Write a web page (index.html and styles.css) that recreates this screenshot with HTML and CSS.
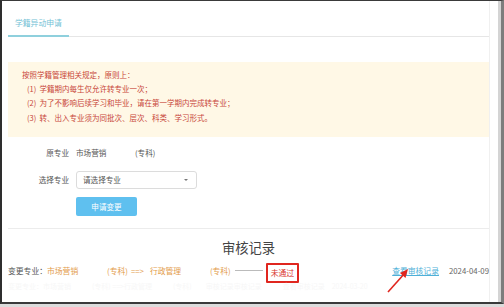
FILE: index.html
```html
<!DOCTYPE html>
<html lang="zh-CN">
<head>
<meta charset="utf-8">
<title>学籍异动申请</title>
<link rel="stylesheet" href="styles.css">
</head>
<body>
<div class="frame">
  <div class="panel">
    <div class="tabs">
      <div class="tab">学籍异动申请</div>
    </div>

    <div class="notice">
      <p>按照学籍管理相关规定，原则上：</p>
      <p class="item">(1)&nbsp;&nbsp;学籍期内每生仅允许转专业一次；</p>
      <p class="item">(2)&nbsp;&nbsp;为了不影响后续学习和毕业，请在第一学期内完成转专业；</p>
      <p class="item">(3)&nbsp;&nbsp;转、出入专业须为同批次、层次、科类、学习形式。</p>
    </div>

    <div class="form">
      <div class="label row1">原专业</div>
      <div class="value row1"><span class="major">市场营销</span><span>(专科)</span></div>
      <div class="label row2">选择专业</div>
      <div class="value row2">
        <div class="select"><span>请选择专业</span><i class="caret"></i></div>
      </div>
      <div class="value row3"><button class="btn">申请变更</button></div>
    </div>

    <div class="records">
      <h2 class="title">审核记录</h2>
      <div class="record">
        <span class="key">变更专业：</span>
        <span class="org name">市场营销</span>
        <span class="org">(专科)</span>
        <span class="org arrow">==&gt;</span>
        <span class="org name">行政管理</span>
        <span class="org">(专科)</span>
        <span class="line"></span>
        <span class="status">未通过</span>
        <a class="link" href="#">查看审核记录</a>
        <span class="date">2024-04-09</span>
      </div>
      <div class="ghost">变更专业：市场营销　　　(专科) ==&gt;行政管理　　　(专科)　　审核记录审核记录　　　查看审核记录　2024-03-20</div>
    </div>

    <svg class="pointer" width="30" height="30" viewBox="0 0 30 30">
      <line x1="3" y1="26" x2="20" y2="7" stroke="#e0261f" stroke-width="1.6"/>
      <polygon points="23,3 20.5,12 15,7" fill="#e0261f"/>
    </svg>
  </div>
</div>
</body>
</html>
```

FILE: styles.css
```css
* { box-sizing: border-box; }
html, body { margin: 0; padding: 0; }
body {
  width: 504px;
  height: 307px;
  background: #dcdcdc;
  font-family: "Noto Sans CJK SC", "Noto Sans", sans-serif;
  overflow: hidden;
}
.frame {
  width: 504px;
  height: 304px;
  border-top: 1px solid #3a3a3a;
  border-left: 2px solid #2e2e2e;
  border-bottom: 2px solid #3a3a3a;
  border-right: 3px solid #7d7d7d;
  background: #ffffff;
  box-shadow: inset -3px 0 0 #d4d4d4;
}
.panel {
  position: relative;
  height: 100%;
  margin-right: 11px;
  padding-left: 6px;
  border-right: 1px solid #f0f0f0;
}
.tabs {
  display: flex;
  border-bottom: 1px solid #e6e6e6;
}
.tab {
  padding: 16px 6px 6px 7px;
  width: 61px;
  font-size: 7.8px;
  line-height: 12px;
  color: #74c2d6;
  border-bottom: 2px solid #8fd0dd;
  margin-bottom: -1px;
  white-space: nowrap;
}
.notice {
  margin-top: 25px;
  background: #fff8e6;
  padding: 6px 14px 12px;
  color: #c8463a;
  font-size: 7.5px;
  line-height: 14.2px;
}
.notice p { margin: 0; white-space: nowrap; }
.notice .item { padding-left: 5px; }

.form {
  display: grid;
  grid-template-columns: 61px auto;
  column-gap: 7px;
  font-size: 7.6px;
  color: #555;
  margin-top: 8px;
}
.label { text-align: right; }
.row1 { line-height: 16px; }
.row2 { margin-top: 10px; display: flex; align-items: center; }
.label.row2 { justify-content: flex-end; }
.row3 { grid-column: 2; margin-top: 8px; }
.major { display: inline-block; width: 59px; }
.select {
  width: 121px;
  height: 18px;
  border: 1px solid #dcdcdc;
  border-radius: 3px;
  display: flex;
  align-items: center;
  justify-content: space-between;
  padding: 0 8px 0 6px;
  color: #555;
}
.caret {
  width: 0; height: 0;
  border-left: 2px solid transparent;
  border-right: 2px solid transparent;
  border-top: 2px solid #777;
}
.btn {
  width: 61px;
  height: 19px;
  border: none;
  border-radius: 2px;
  background: #5fc0ef;
  color: #fff;
  font-family: inherit;
  font-size: 7.6px;
  padding: 0;
}
.records {
  margin-top: 12px;
  border-top: 1px solid #ececec;
}
.title {
  margin: 10px 0 0;
  text-align: center;
  font-size: 13.3px;
  line-height: 18px;
  font-weight: normal;
  color: #444;
}
.record {
  display: flex;
  align-items: center;
  font-size: 7.8px;
  margin-top: 4px;
  height: 20px;
  white-space: nowrap;
}
.key { width: 39px; color: #555; }
.org { color: #e39c4b; }
.name { width: 60px; }
.arrow { width: 22px; padding-left: 3px; }
.line {
  width: 28px;
  height: 1px;
  background: #bbb;
  margin: 0 3px 0 4px;
}
.status {
  border: 2px solid #e0261f;
  border-radius: 1px;
  color: #d8332b;
  height: 20px;
  line-height: 16px;
  padding: 0 3px 0 3px;
  margin-top: 5px;
}
.link {
  margin-left: auto;
  color: #4eb0d8;
  text-decoration: underline;
}
.date {
  margin-left: 10px;
  color: #666;
}
.ghost {
  margin-top: 0;
  font-size: 7px;
  line-height: 10px;
  color: #f7f7f7;
  white-space: nowrap;
  overflow: hidden;
}
.pointer {
  position: absolute;
  left: 383px;
  top: 265px;
}
```
